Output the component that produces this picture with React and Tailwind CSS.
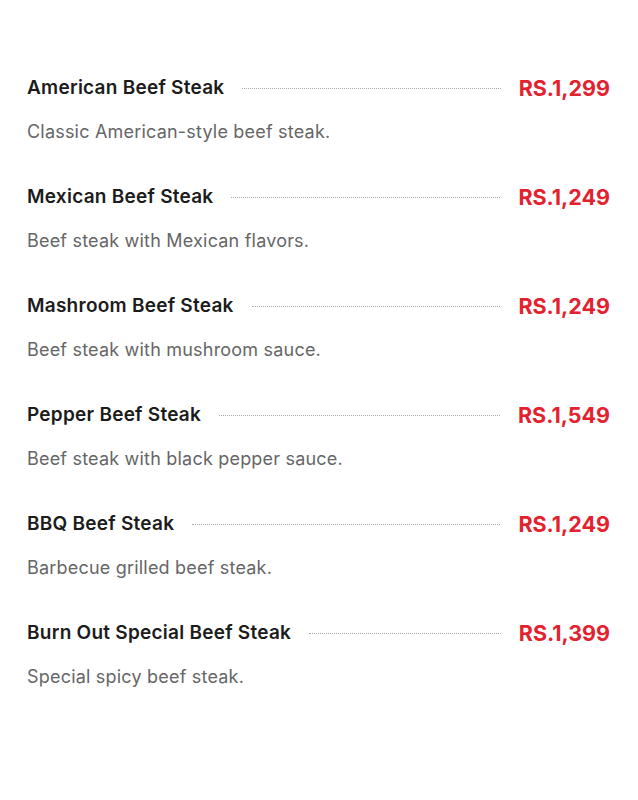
import React from 'react';

const items = [
  { name: 'American Beef Steak', price: 'RS.1,299', desc: 'Classic American-style beef steak.' },
  { name: 'Mexican Beef Steak', price: 'RS.1,249', desc: 'Beef steak with Mexican flavors.' },
  { name: 'Mashroom Beef Steak', price: 'RS.1,249', desc: 'Beef steak with mushroom sauce.' },
  { name: 'Pepper Beef Steak', price: 'RS.1,549', desc: 'Beef steak with black pepper sauce.' },
  { name: 'BBQ Beef Steak', price: 'RS.1,249', desc: 'Barbecue grilled beef steak.' },
  { name: 'Burn Out Special Beef Steak', price: 'RS.1,399', desc: 'Special spicy beef steak.' },
];

const MenuItem = ({ item }) => (
  <div className="flex flex-col">
    <div className="flex h-[28px] items-center">
      <h3 className="text-[19px] font-semibold tracking-[0.25px] text-[#1c1c1c]">{item.name}</h3>
      <div className="mx-[18px] flex-1 border-t border-dotted border-[#a8a8a8]" />
      <span className="text-[21.5px] font-bold text-[#e3222f]">{item.price}</span>
    </div>
    <p className="mt-[18px] text-[18px] leading-[24px] tracking-[0.2px] text-[#666666]">{item.desc}</p>
  </div>
);

const App = () => {
  return (
    <div className="min-h-screen bg-white" style={{ fontFamily: 'Inter, "Open Sans", sans-serif' }}>
      <div className="flex flex-col gap-[39px] pl-[27px] pr-[28px] pt-[74px]">
        {items.map((item) => (
          <MenuItem key={item.name} item={item} />
        ))}
      </div>
    </div>
  );
};

export default App;
